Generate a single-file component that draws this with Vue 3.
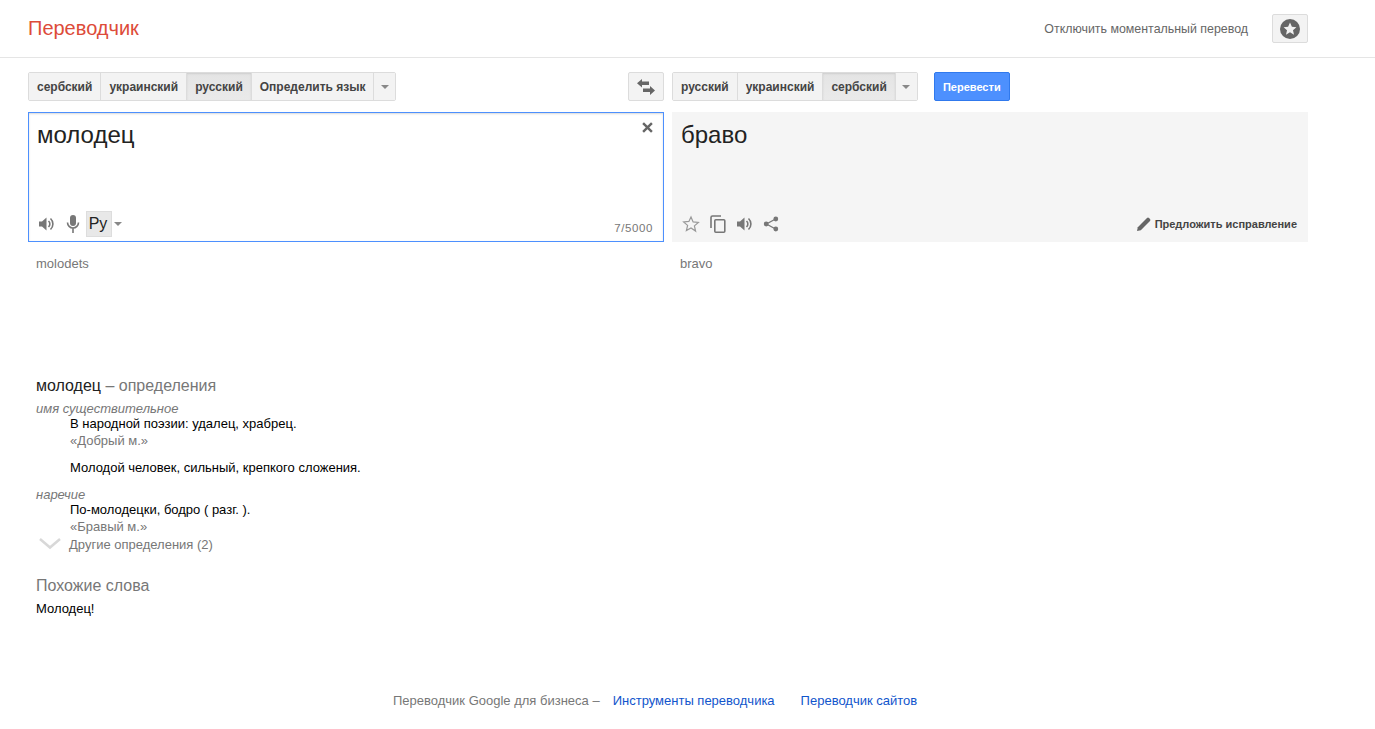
<script setup>
const sourceLangs = [
  { name: 'сербский' },
  { name: 'украинский' },
  { name: 'русский', active: true },
  { name: 'Определить язык' },
];
const targetLangs = [
  { name: 'русский' },
  { name: 'украинский' },
  { name: 'сербский', active: true },
];
</script>

<template>
  <div class="app">
    <header class="topBar">
      <div class="logo">Переводчик</div>
      <div class="topRight">
        <span class="instant">Отключить моментальный перевод</span>
        <button class="btn starBtn" aria-label="Избранное">
          <svg viewBox="0 0 20 20" width="20" height="20">
            <circle cx="10" cy="10" r="10" fill="#666" />
            <path d="M10 3.6l1.9 4.2 4.5.4-3.4 3 1 4.5-4-2.4-4 2.4 1-4.5-3.4-3 4.5-.4z" fill="#f1f1f1" />
          </svg>
        </button>
      </div>
    </header>

    <main class="content">
      <div class="toolbar">
        <div class="side">
          <div class="langs">
            <button v-for="l in sourceLangs" :key="l.name" class="lang" :class="{ active: l.active }">{{ l.name }}</button>
            <button class="lang drop" aria-label="Ещё"><i class="caret"></i></button>
          </div>
          <button class="btn swapBtn" aria-label="Поменять">
            <svg viewBox="0 0 18 16" width="18" height="16">
              <path d="M5 0v2.500h7v3.500H5v2.500L0 4.200z" fill="#666" />
              <path d="M13 7v2.500H6v3.500h7V16l5-4.500z" fill="#666" />
            </svg>
          </button>
        </div>
        <div class="side right">
          <div class="langs">
            <button v-for="l in targetLangs" :key="l.name" class="lang" :class="{ active: l.active }">{{ l.name }}</button>
            <button class="lang drop" aria-label="Ещё"><i class="caret"></i></button>
          </div>
          <button class="translate">Перевести</button>
        </div>
      </div>

      <div class="panes">
        <div class="pane source">
          <div class="paneText">молодец</div>
          <svg class="clear" viewBox="0 0 10 10" width="11" height="11">
            <path d="M1 1l8 8M9 1l-8 8" stroke="#666" stroke-width="2.200" fill="none" />
          </svg>
          <div class="paneBottom">
            <svg class="ico speaker" viewBox="0 0 16 16" width="16" height="16">
              <path d="M1 5.500h3L8.500 1.500v13L4 10.500H1z" fill="#777" />
              <path d="M10.500 5a4 4 0 0 1 0 6M12.500 2.500a7.500 7.500 0 0 1 0 11" stroke="#777" stroke-width="1.600" fill="none" />
            </svg>
            <svg class="ico mic" viewBox="0 0 14 20" width="14" height="20">
              <rect x="4" y="1" width="6" height="11" rx="3" fill="#777" />
              <path d="M1.500 8.500a5.500 5.500 0 0 0 11 0M7 14v5" stroke="#777" stroke-width="1.600" fill="none" />
            </svg>
            <span class="keyboard">Ру</span>
            <i class="caret small"></i>
            <span class="count">7/5000</span>
          </div>
        </div>
        <div class="pane target">
          <div class="paneText">браво</div>
          <div class="paneBottom">
            <svg class="ico" viewBox="0 0 18 18" width="18" height="18">
              <path d="M9 2l2.100 4.900 5.300.5-4 3.500 1.200 5.200L9 13l-4.600 2.600 1.200-5.200-4-3.500 5.300-.5z" fill="none" stroke="#999" stroke-width="1.200" />
            </svg>
            <svg class="ico copy" viewBox="0 0 16 18" width="16" height="18">
              <path d="M11 1H2.500A1.500 1.500 0 0 0 1 2.500V13" stroke="#777" stroke-width="1.600" fill="none" />
              <rect x="4.800" y="4.800" width="10" height="12.400" rx="1" stroke="#777" stroke-width="1.600" fill="none" />
            </svg>
            <svg class="ico speak" viewBox="0 0 16 16" width="16" height="16">
              <path d="M1 5.500h3L8.500 1.500v13L4 10.500H1z" fill="#777" />
              <path d="M10.500 5a4 4 0 0 1 0 6M12.500 2.500a7.500 7.500 0 0 1 0 11" stroke="#777" stroke-width="1.600" fill="none" />
            </svg>
            <svg class="ico share" viewBox="0 0 16 16" width="16" height="16">
              <path d="M12.500 3L3.500 8l9 5" stroke="#777" stroke-width="1.300" fill="none" />
              <circle cx="12.800" cy="3" r="2.400" fill="#777" />
              <circle cx="3.200" cy="8" r="2.400" fill="#777" />
              <circle cx="12.800" cy="13" r="2.400" fill="#777" />
            </svg>
            <span class="suggest">
              <svg viewBox="0 0 14 14" width="14" height="14">
                <path d="M0 14l.8-3.800L10 1a1.500 1.500 0 0 1 2 0l1 1a1.500 1.500 0 0 1 0 2l-9.200 9.200z" fill="#666" />
              </svg>
              Предложить исправление
            </span>
          </div>
        </div>
      </div>

      <div class="translit">
        <div class="side">molodets</div>
        <div class="side right">bravo</div>
      </div>

      <section class="defs">
        <h3 class="defTitle">молодец <span>– определения</span></h3>
        <div class="pos">имя существительное</div>
        <div class="gloss">В народной поэзии: удалец, храбрец.</div>
        <div class="example">«Добрый м.»</div>
        <div class="gloss second">Молодой человек, сильный, крепкого сложения.</div>
        <div class="pos next">наречие</div>
        <div class="gloss">По-молодецки, бодро ( разг. ).</div>
        <div class="example">«Бравый м.»</div>
        <div class="more">
          <svg viewBox="0 0 22 12" width="22" height="12">
            <path d="M1 1l10 8.500L21 1" stroke="#d8d8d8" stroke-width="2.500" fill="none" />
          </svg>
          <span>Другие определения (2)</span>
        </div>
        <h3 class="simTitle">Похожие слова</h3>
        <div class="similar">Молодец!</div>
      </section>
    </main>

    <footer class="foot">
      <span class="lead">Переводчик Google для бизнеса –</span>
      <a>Инструменты переводчика</a>
      <a>Переводчик сайтов</a>
    </footer>
  </div>
</template>

<style scoped>
.app {
  font-family: "Liberation Sans", Arial, sans-serif;
  font-size: 13px;
  color: #222;
  height: 729px;
  overflow: hidden;
}

button {
  font-family: inherit;
  margin: 0;
}

.topBar {
  height: 57px;
  border-bottom: 1px solid #e5e5e5;
  padding: 0 67px 0 28px;
  display: flex;
  align-items: center;
  justify-content: space-between;
}

.logo {
  font-size: 20px;
  color: #dd4b39;
}

.topRight {
  display: flex;
  align-items: center;
  gap: 24px;
}

.instant {
  color: #666;
  font-size: 12.4px;
}

.btn {
  background: #f3f3f3;
  border: 1px solid #dcdcdc;
  border-radius: 2px;
  display: flex;
  align-items: center;
  justify-content: center;
  padding: 0;
}

.starBtn {
  width: 36px;
  height: 29px;
}

.content {
  width: 1280px;
  margin-left: 28px;
}

.toolbar {
  display: flex;
  gap: 8px;
  margin-top: 14px;
}

.side {
  width: 636px;
  flex: none;
}

.toolbar .side {
  display: flex;
  justify-content: space-between;
  align-items: center;
}

.toolbar .side.right {
  justify-content: flex-start;
  gap: 16px;
}

.langs {
  display: flex;
  height: 29px;
  border: 1px solid #dcdcdc;
  border-radius: 2px;
  box-sizing: border-box;
}

.lang {
  background: #f3f3f3;
  border: none;
  border-right: 1px solid #dcdcdc;
  padding: 0 8px;
  font-size: 12px;
  font-weight: bold;
  color: #444;
  height: 100%;
}

.lang.active {
  background: linear-gradient(#e4e4e4, #eaeaea);
  box-shadow: inset 0 1px 2px rgba(0, 0, 0, 0.1);
}

.lang.drop {
  width: 21px;
  padding: 0;
  border-right: none;
  display: flex;
  align-items: center;
  justify-content: center;
}

.caret {
  display: inline-block;
  width: 0;
  height: 0;
  border-left: 4px solid transparent;
  border-right: 4px solid transparent;
  border-top: 4px solid #888;
}

.swapBtn {
  width: 36px;
  height: 29px;
}

.translate {
  width: 76px;
  height: 29px;
  background: #4d90fe;
  border: 1px solid #3079ed;
  border-radius: 2px;
  color: #fff;
  font-size: 11px;
  font-weight: bold;
  padding: 0;
}

.panes {
  display: flex;
  gap: 8px;
  margin-top: 11px;
}

.pane {
  width: 636px;
  height: 130px;
  box-sizing: border-box;
  position: relative;
  display: flex;
  flex-direction: column;
  justify-content: space-between;
}

.source {
  border: 1px solid #4d90fe;
  box-shadow: inset 0 1px 2px rgba(0, 0, 0, 0.15);
  padding: 8px 10px 5px 9px;
}

.source .paneText {
  margin-left: -1px;
}

.target {
  background: #f5f5f5;
  padding: 9px 11px 6px 10px;
}

.target .paneText {
  margin-left: -1px;
}

.paneText {
  font-size: 24px;
  line-height: 28px;
  color: #222;
}

.clear {
  position: absolute;
  top: 9px;
  right: 10px;
}

.paneBottom {
  display: flex;
  align-items: center;
  height: 24px;
}

.mic {
  margin-left: 12px;
}

.keyboard {
  width: 26px;
  height: 26px;
  box-sizing: border-box;
  border: 1px solid #ddd;
  line-height: 24px;
  margin-left: 6px;
  background: #e8e8e8;
  text-align: center;
  font-size: 16px;
  color: #222;
  padding-right: 2px;
}

.caret.small {
  margin-left: 2px;
}

.count {
  margin-left: auto;
  margin-top: 8px;
  color: #777;
  font-size: 11.5px;
  letter-spacing: 0.6px;
}

.copy {
  margin-left: 10px;
}

.speak {
  margin-left: 10px;
}

.share {
  margin-left: 11px;
}

.suggest {
  margin-left: auto;
  display: flex;
  align-items: center;
  gap: 4px;
  font-size: 11px;
  font-weight: bold;
  color: #444;
}

.translit {
  display: flex;
  gap: 8px;
  margin-top: 15px;
  color: #777;
  line-height: 14px;
}

.translit .side {
  padding-left: 8px;
  box-sizing: border-box;
}

.defs {
  margin-top: 105px;
  padding-left: 8px;
  color: #000;
}

.defTitle,
.simTitle {
  font-size: 16px;
  font-weight: normal;
  margin: 0;
  line-height: 20px;
  color: #222;
}

.defTitle span,
.simTitle {
  color: #777;
}

.pos {
  font-style: italic;
  color: #777;
  line-height: 14px;
  margin-top: 6px;
}

.pos.next {
  margin-top: 13px;
}

.gloss,
.example {
  margin-left: 34px;
  line-height: 15px;
}

.gloss.second {
  margin-top: 12px;
}

.example {
  color: #777;
  margin-top: 2px;
}

.more {
  display: flex;
  align-items: center;
  gap: 8px;
  color: #777;
  margin-left: 3px;
  margin-top: 1px;
  height: 18px;
}

.simTitle {
  margin-top: 23px;
}

.similar {
  margin-top: 5px;
  line-height: 15px;
}

.foot {
  margin-top: 77px;
  padding-left: 393px;
  display: flex;
  line-height: 16px;
}

.lead {
  color: #777;
}

.foot a {
  color: #1155cc;
  margin-left: 13px;
}

.foot a + a {
  margin-left: 26px;
}
</style>
